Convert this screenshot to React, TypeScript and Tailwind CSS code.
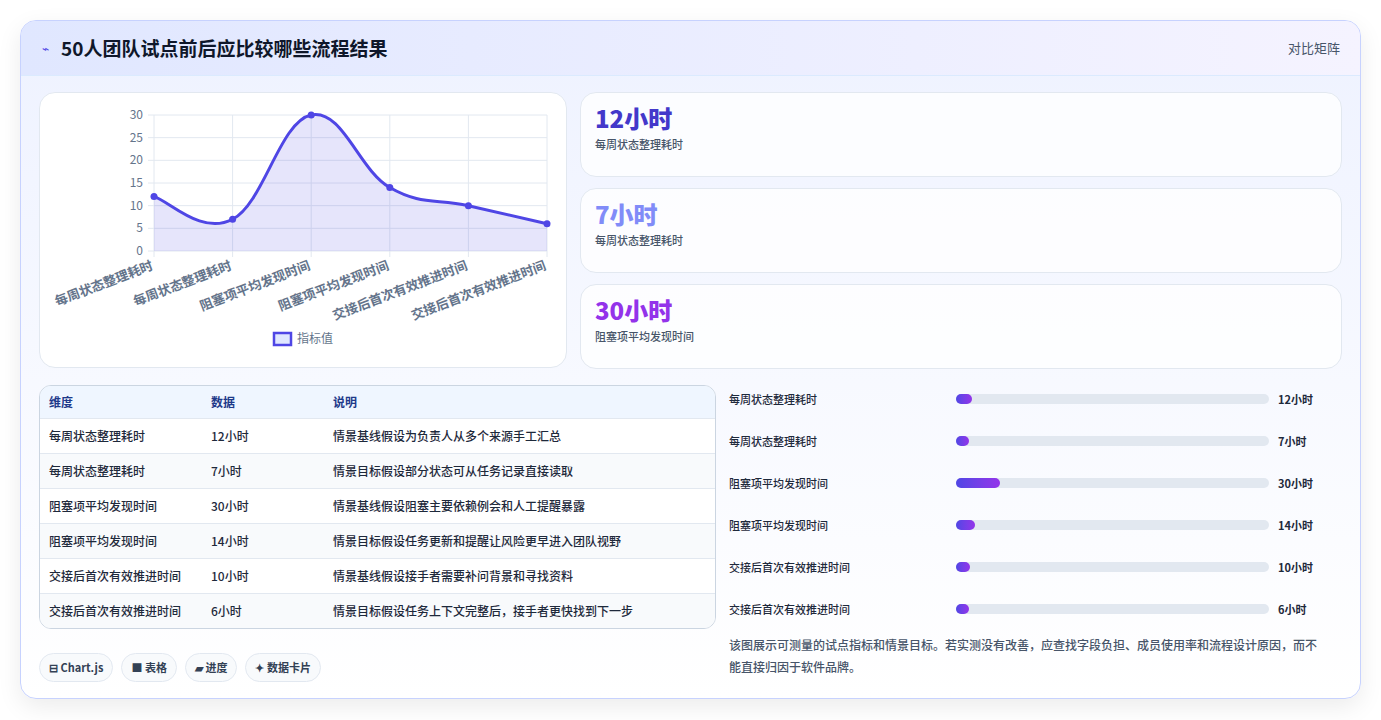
import * as React from "react";

const labels = ["每周状态整理耗时", "每周状态整理耗时", "阻塞项平均发现时间", "阻塞项平均发现时间", "交接后首次有效推进时间", "交接后首次有效推进时间"];
const values = [12, 7, 30, 14, 10, 6];
const notes = [
    "情景基线假设为负责人从多个来源手工汇总",
    "情景目标假设部分状态可从任务记录直接读取",
    "情景基线假设阻塞主要依赖例会和人工提醒暴露",
    "情景目标假设任务更新和提醒让风险更早进入团队视野",
    "情景基线假设接手者需要补问背景和寻找资料",
    "情景目标假设任务上下文完整后，接手者更快找到下一步",
];
const barWidths = [5, 4, 14, 6, 4.5, 4];

const font = { fontFamily: '"Noto Sans CJK SC", "Noto Sans", sans-serif' };

function LineChart() {
    const pts = values.map((v, i) => [114 + i * 78.6, 158 - (v * 136) / 30]);
    let d = `M${pts[0][0]},${pts[0][1]}`;
    for (let i = 0; i < pts.length - 1; i++) {
        const p0 = pts[Math.max(0, i - 1)], p1 = pts[i], p2 = pts[i + 1], p3 = pts[Math.min(pts.length - 1, i + 2)];
        const t = 0.2;
        const c1 = [p1[0] + (p2[0] - p0[0]) * t, p1[1] + (p2[1] - p0[1]) * t];
        const c2 = [p2[0] - (p3[0] - p1[0]) * t, p2[1] - (p3[1] - p1[1]) * t];
        d += ` C${c1[0]},${c1[1]} ${c2[0]},${c2[1]} ${p2[0]},${p2[1]}`;
    }
    const area = `${d} L${pts[5][0]},158 L114,158 Z`;
    return (
        <svg width="527" height="275" viewBox="0 0 527 275" style={font}>
            {[0, 5, 10, 15, 20, 25, 30].map((v) => {
                const y = 158 - (v * 136) / 30;
                return (
                    <g key={v}>
                        <line x1="108" x2="507" y1={y} y2={y} stroke="#e2e8f0" />
                        <text x="103" y={y + 4} textAnchor="end" fontSize="12" fill="#64748b">{v}</text>
                    </g>
                );
            })}
            {pts.map((p, i) => (
                <line key={i} x1={p[0]} x2={p[0]} y1="22" y2="164" stroke="#e2e8f0" />
            ))}
            <path d={area} fill="#4f46e5" fillOpacity="0.14" />
            <path d={d} fill="none" stroke="#4f46e5" strokeWidth="3" />
            {pts.map((p, i) => (
                <circle key={i} cx={p[0]} cy={p[1]} r="3.5" fill="#4f46e5" />
            ))}
            {pts.map((p, i) => (
                <text key={i} x={p[0]} y="176" textAnchor="end" fontSize="13" fontWeight="600" fill="#64748b"
                    transform={`rotate(-21 ${p[0]} 176)`}>{labels[i]}</text>
            ))}
            <rect x="234" y="240" width="17" height="12" fill="#e0e7ff" stroke="#4f46e5" strokeWidth="2.5" />
            <text x="257" y="250" fontSize="12" fill="#64748b">指标值</text>
        </svg>
    );
}

export default function App() {
    return (
        <div className="min-h-screen bg-white p-5" style={font}>
            <div className="rounded-2xl border border-[#c7d2fe] bg-gradient-to-b from-[#eef2ff] to-white overflow-hidden shadow-[0_8px_24px_rgba(0,0,0,0.08)]">
                <div className="flex items-center justify-between h-[55px] pl-[21px] pr-5 bg-gradient-to-r from-[#e0e7ff] to-[#f5f3ff] border-b border-[#dbeafe]">
                    <div className="flex items-center gap-3">
                        <span className="text-[#4f46e5] text-xs">⌁</span>
                        <h1 className="text-[19px] font-bold text-[#0f172a]">50人团队试点前后应比较哪些流程结果</h1>
                    </div>
                    <span className="text-[13px] text-[#475569]">对比矩阵</span>
                </div>
                <div className="px-[18px] pt-4 pb-4">
                    <div className="flex gap-[13px]">
                        <div className="w-[528px] h-[276px] shrink-0 rounded-2xl border border-[#e2e8f0] bg-white">
                            <LineChart />
                        </div>
                        <div className="flex-1 flex flex-col gap-[11px]">
                            {[["12小时", "text-[#4338ca]", "每周状态整理耗时"], ["7小时", "text-[#818cf8]", "每周状态整理耗时"], ["30小时", "text-[#9333ea]", "阻塞项平均发现时间"]].map(([v, c, l], i) => (
                                <div key={i} className="h-[85px] rounded-2xl border border-[#e2e8f0] bg-white/80 px-[14px] pt-[9px]">
                                    <div className={`text-[24px] font-extrabold leading-[32px] ${c}`}>{v}</div>
                                    <div className="text-[11px] font-medium text-[#475569] mt-0.5">{l}</div>
                                </div>
                            ))}
                        </div>
                    </div>
                    <div className="flex gap-[13px] mt-4">
                        <div className="w-[677px] shrink-0">
                            <div className="rounded-xl border border-[#cbd5e1] overflow-hidden bg-white">
                                <table className="w-full text-[12px] text-left">
                                    <thead className="bg-[#eff6ff] text-[#1e3a8a]">
                                        <tr className="h-[32px]">
                                            <th className="pl-[9px] w-[171px] font-semibold">维度</th>
                                            <th className="w-[122px] font-semibold">数据</th>
                                            <th className="font-semibold">说明</th>
                                        </tr>
                                    </thead>
                                    <tbody className="text-[#1e293b] font-medium">
                                        {labels.map((l, i) => (
                                            <tr key={i} className={`h-[35px] border-t border-[#e2e8f0] ${i % 2 ? "bg-[#f8fafc]" : ""}`}>
                                                <td className="pl-[9px]">{l}</td>
                                                <td>{values[i]}小时</td>
                                                <td>{notes[i]}</td>
                                            </tr>
                                        ))}
                                    </tbody>
                                </table>
                            </div>
                            <div className="flex gap-2 mt-6">
                                {["⊟ Chart.js", "■ 表格", "▰ 进度", "✦ 数据卡片"].map((t) => (
                                    <span key={t} className="h-[29px] px-[9px] flex items-center rounded-full border border-[#e2e8f0] bg-[#f8fafc] text-[11px] font-semibold text-[#334155]">{t}</span>
                                ))}
                            </div>
                        </div>
                        <div className="flex-1 flex flex-col -mt-[7px]">
                            {labels.map((l, i) => (
                                <div key={i} className="h-[42px] flex items-center">
                                    <span className="w-[227px] text-[11px] font-medium text-[#1e293b]">{l}</span>
                                    <div className="w-[313px] h-[10px] rounded-full bg-[#e2e8f0]">
                                        <div className="h-full rounded-full bg-gradient-to-r from-[#4f46e5] to-[#9333ea]" style={{ width: `${barWidths[i]}%`, minWidth: 12 }} />
                                    </div>
                                    <span className="ml-[9px] text-[11px] font-bold text-[#1e293b]">{values[i]}小时</span>
                                </div>
                            ))}
                            <p className="mt-[4px] text-[12px] font-medium leading-[22px] text-[#475569] pr-5">该图展示可测量的试点指标和情景目标。若实测没有改善，应查找字段负担、成员使用率和流程设计原因，而不能直接归因于软件品牌。</p>
                        </div>
                    </div>
                </div>
            </div>
        </div>
    );
}
